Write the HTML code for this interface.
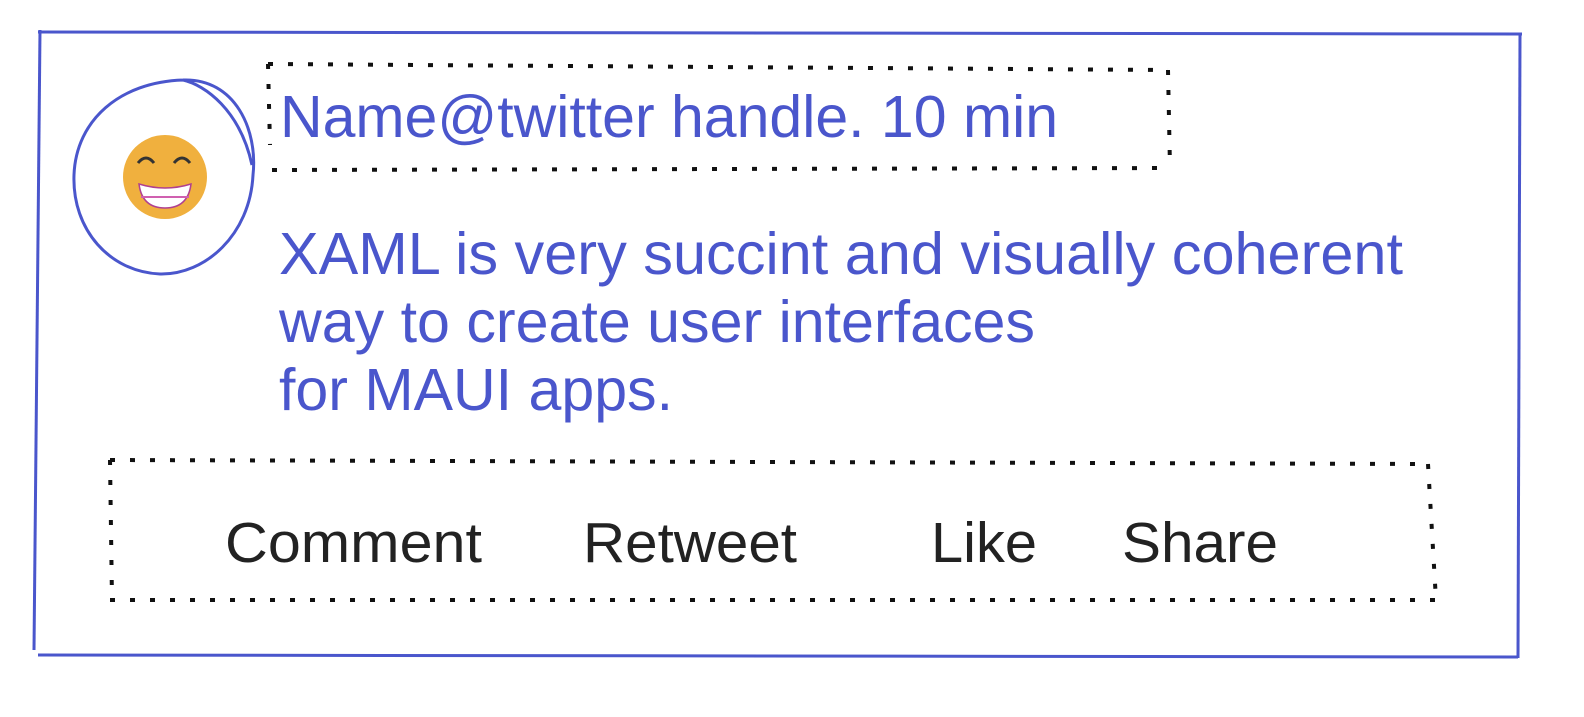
<!DOCTYPE html>
<html><head><style>
html,body{margin:0;padding:0;background:#fff;width:1584px;height:717px;overflow:hidden}
svg{display:block}
text{font-family:"Liberation Sans",Arial,sans-serif}
</style></head><body>
<svg width="1584" height="717" viewBox="0 0 1584 717">
<g fill="none" stroke="#4a56cc" stroke-width="3">
<path d="M38 32 L1522 34"/>
<path d="M1520 34 L1518 658"/>
<path d="M38 655 L1518 657"/>
<path d="M40 30 L34 650"/>
<path d="M183 80 C235 78 258 130 253 175 C250 235 205 275 160 274 C110 272 72 230 74 175 C76 120 120 82 183 80 C205 85 240 110 252 165"/>
</g>
<g fill="none" stroke="#111" stroke-width="4" stroke-dasharray="5 15">
<path d="M268 64 L1168 70"/>
<path d="M1168 70 L1170 168"/>
<path d="M272 170 L1170 168"/>
<path d="M268 64 L270 145"/>
<path d="M110 460 L1428 464"/>
<path d="M1428 464 L1436 600"/>
<path d="M110 600 L1436 600"/>
<path d="M110 460 L112 600"/>
</g>
<circle cx="165" cy="177" r="42" fill="#f0b03e"/>
<path d="M138 163 q8 -10 16 0 M174 163 q8 -10 16 0" stroke="#333" stroke-width="3" fill="none"/>
<path d="M139 184 Q165 192 191 184 Q188 208 165 208 Q142 208 139 184 Z" fill="#fff" stroke="#b04090" stroke-width="1.5"/>
<path d="M141 197 H189" stroke="#d060b0" stroke-width="2"/>
<g fill="#4a56cc" font-size="59">
<text x="280" y="137" textLength="778" lengthAdjust="spacingAndGlyphs">Name@twitter handle. 10 min</text>
<text x="279" y="274" textLength="1124" lengthAdjust="spacingAndGlyphs">XAML is very succint and visually coherent</text>
<text x="279" y="342" textLength="756" lengthAdjust="spacingAndGlyphs">way to create user interfaces</text>
<text x="279" y="410" textLength="394" lengthAdjust="spacingAndGlyphs">for MAUI apps.</text>
</g>
<g fill="#222" font-size="57">
<text x="225" y="562" textLength="257" lengthAdjust="spacingAndGlyphs">Comment</text>
<text x="583" y="562" textLength="214" lengthAdjust="spacingAndGlyphs">Retweet</text>
<text x="931" y="562" textLength="106" lengthAdjust="spacingAndGlyphs">Like</text>
<text x="1122" y="562" textLength="156" lengthAdjust="spacingAndGlyphs">Share</text>
</g>
</svg>
</body></html>
